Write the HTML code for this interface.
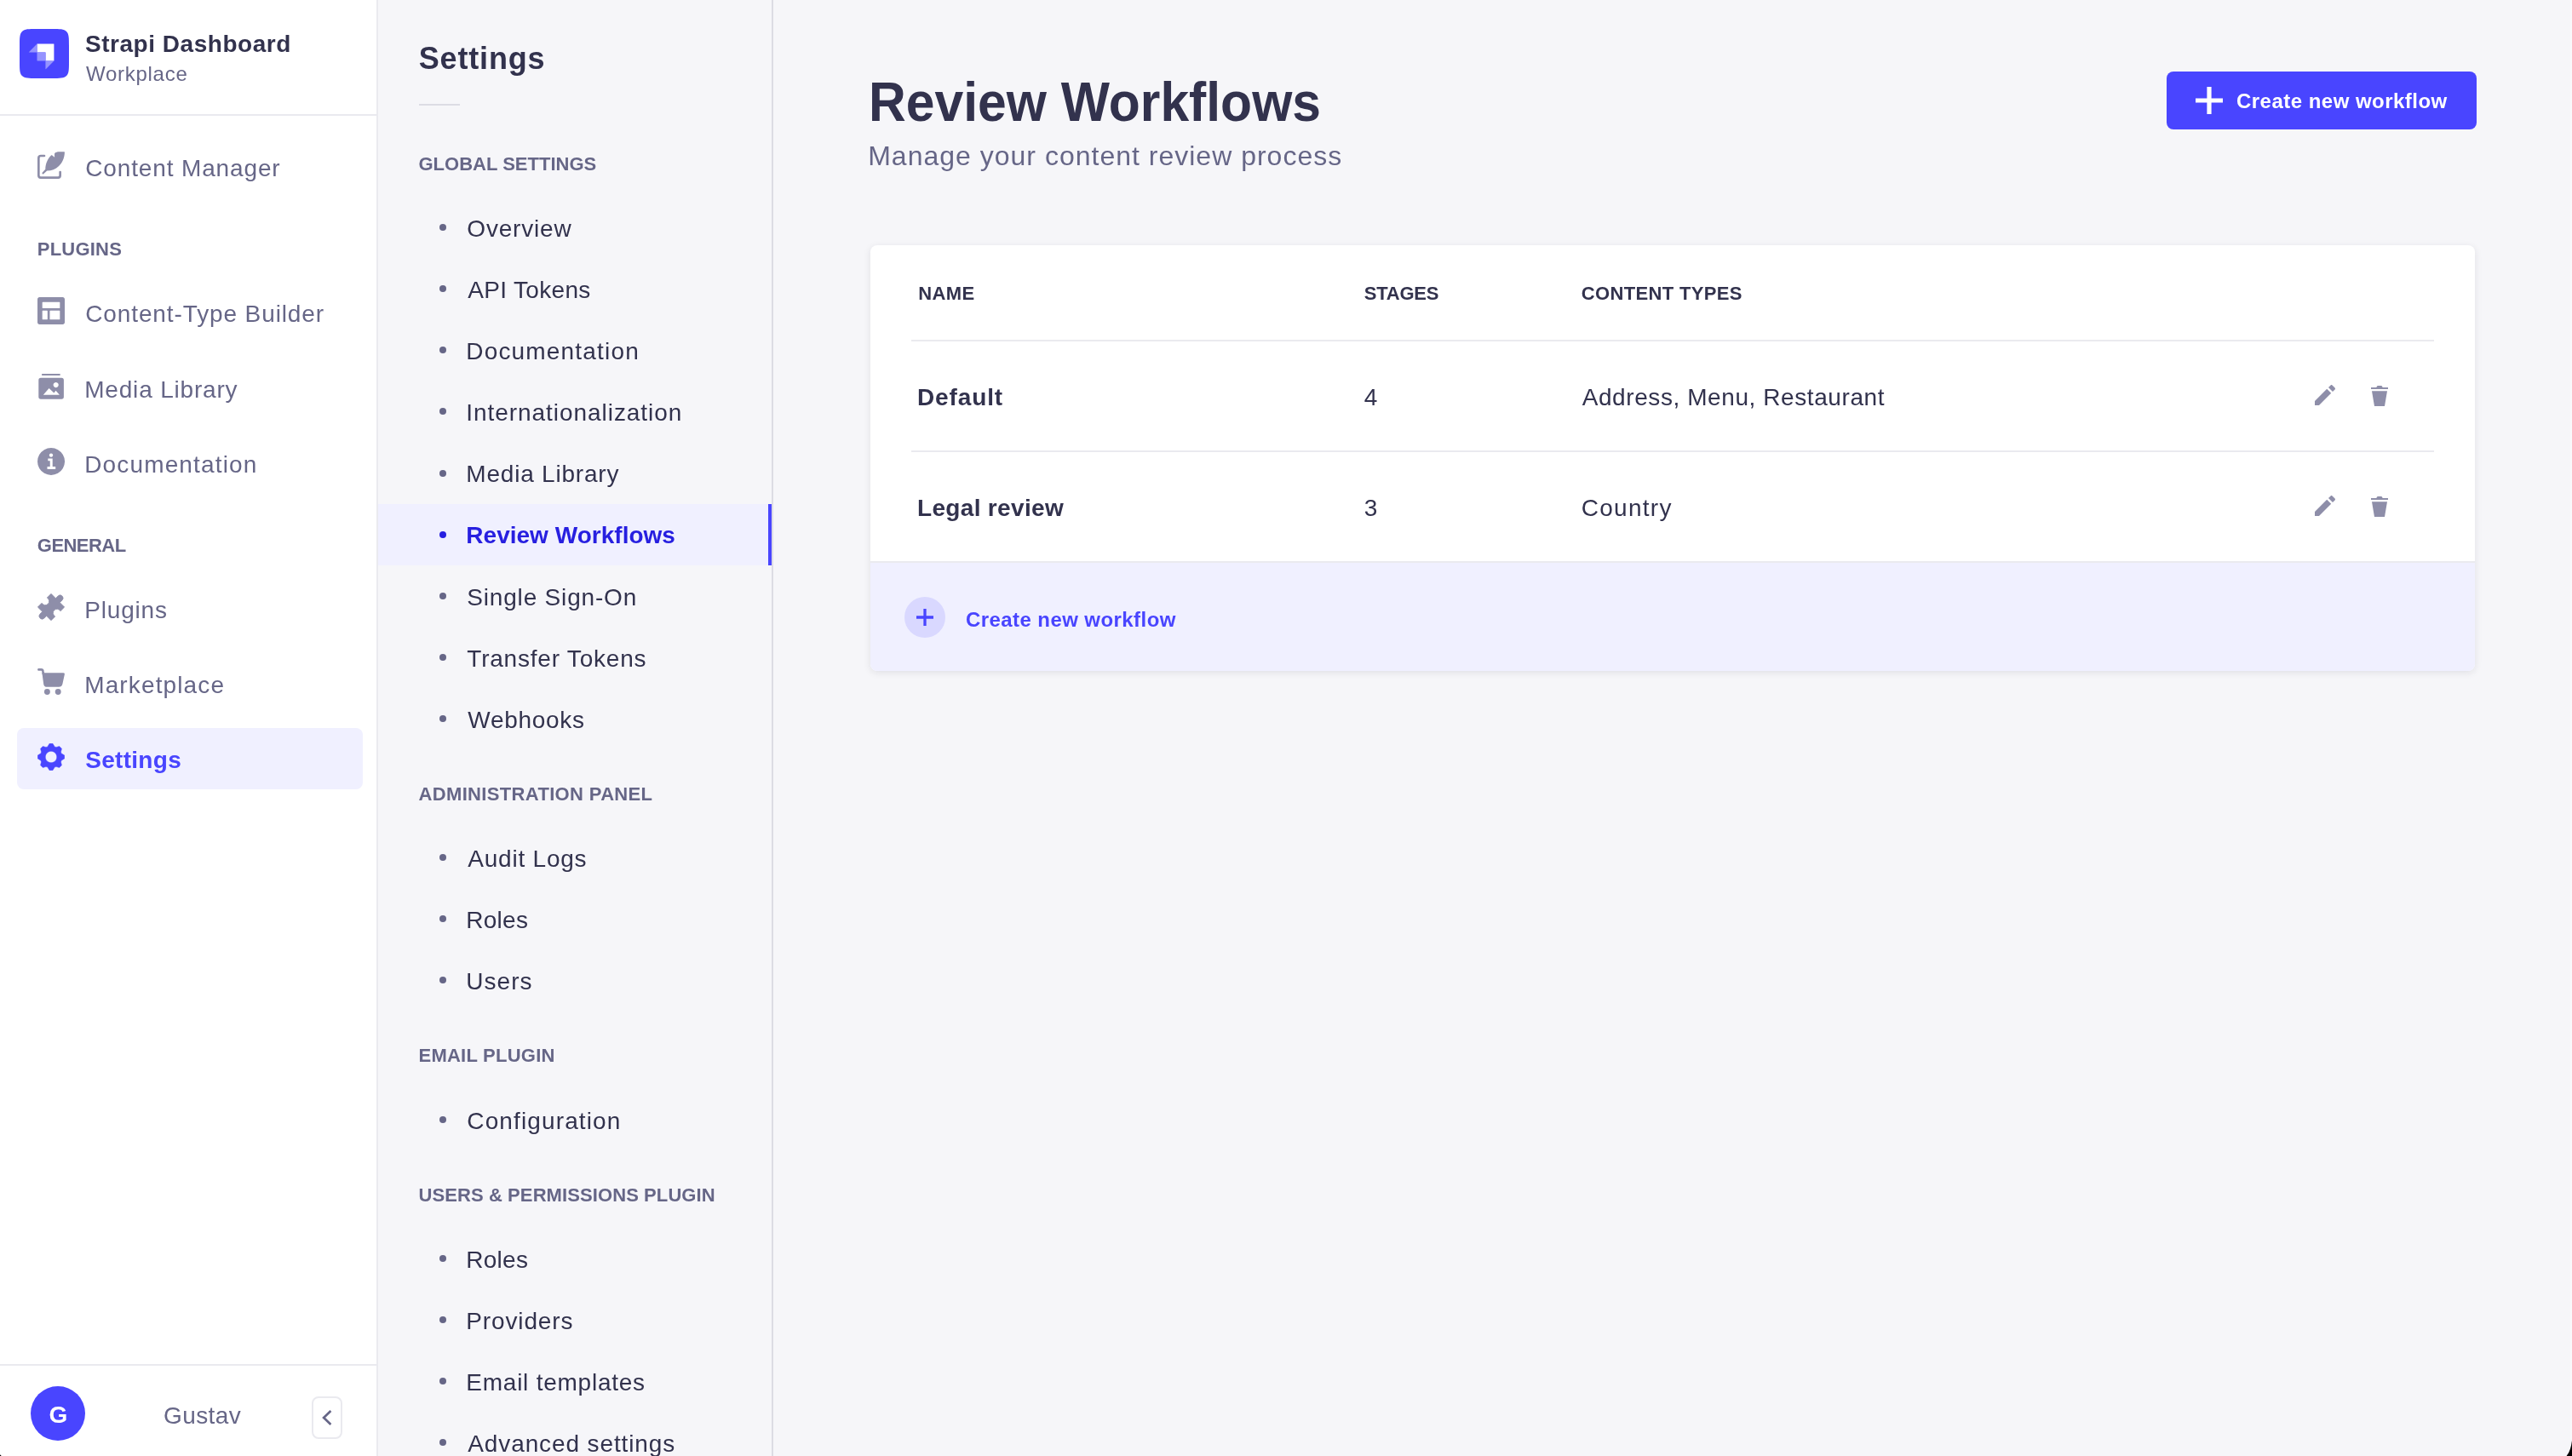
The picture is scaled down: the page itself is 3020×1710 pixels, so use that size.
<!DOCTYPE html>
<html lang="en">
<head>
<meta charset="utf-8">
<title>Review Workflows - Strapi Dashboard</title>
<style>
html,body{margin:0;padding:0}
html{width:3020px;height:1710px;overflow:hidden;background:#f6f6f9}
body{width:3020px;height:1710px;position:relative;overflow:hidden;background:#f6f6f9;font-family:"Liberation Sans",sans-serif}
.t{position:absolute;white-space:nowrap;line-height:1;font-weight:400}
.hl{position:absolute;height:2px;background:#eaeaef}
#nav{position:absolute;left:0;top:0;width:442px;height:1710px;background:#fff;border-right:2px solid #eaeaef}
#subnav{position:absolute;left:444px;top:0;width:462px;height:1710px;background:#f6f6f9;border-right:2px solid #dcdce4}
#txt{position:absolute;left:0;top:0;width:3020px;height:1710px;overflow:hidden;will-change:transform}
#card{position:absolute;left:1022px;top:288px;width:1884px;height:500px;border-radius:8px;background:#fff;box-shadow:0 2px 8px rgba(33,33,52,0.1)}
</style>
</head>
<body>
<div id="nav"></div>
<div class="hl" style="left:0;top:134px;width:442px"></div>
<div class="hl" style="left:0;top:1602px;width:442px"></div>
<svg style="position:absolute;left:23px;top:34px" width="58" height="58" viewBox="0 0 800 800"><path d="M0 277.333C0 146.596 0 81.2266 40.6133 40.6133C81.2266 0 146.596 0 277.333 0H522.667C653.404 0 718.773 0 759.387 40.6133C800 81.2266 800 146.596 800 277.333V522.667C800 653.404 800 718.773 759.387 759.387C718.773 800 653.404 800 522.667 800H277.333C146.596 800 81.2266 800 40.6133 759.387C0 718.773 0 653.404 0 522.667V277.333Z" fill="#4945ff"/><path d="M552 242.667H282.667V380H420V517.333H557.333V248C557.333 245.054 554.946 242.667 552 242.667Z" fill="#fff"/><path d="M282.667 380H414.667C417.612 380 420 382.388 420 385.333V517.333H288C285.054 517.333 282.667 514.946 282.667 512V380Z" fill="#9593ff"/><path d="M420 517.333H557.333L424.552 650.115C422.872 651.795 420 650.605 420 648.229V517.333Z" fill="#9593ff"/><path d="M282.667 380H151.771C149.395 380 148.205 377.128 149.885 375.448L282.667 242.667V380Z" fill="#9593ff"/></svg>
<div style="position:absolute;left:20px;top:855px;width:406px;height:72px;border-radius:8px;background:#f0f0ff"></div>
<svg style="position:absolute;left:44px;top:178px" width="32" height="32" viewBox="0 0 32 32"><path d="M8 5H4Q1.33 5 1.33 7.67V28Q1.33 30.67 4 30.67H24Q26.67 30.67 26.67 28V24" fill="none" stroke="#8e8ea9" stroke-width="2.67" stroke-linecap="round"/><path d="M31 0.2H25.2C23.3 0.2 21.6 0.8 20.7 1.6C20.1 2.1 20 2.6 20 3.3L20.1 6.7L17.3 4.6C16.8 4.2 16.3 4.2 15.8 4.7C11.8 8.6 9.3 14.5 9.3 20.7L5.2 25.2L6.6 26.7L11.2 22.6C16.2 22.7 21.2 21 25.1 17.1C29 13.2 31.6 8 31.9 1.2C31.95 0.5 31.7 0.2 31 0.2Z" fill="#8e8ea9"/></svg>
<svg style="position:absolute;left:44px;top:349px" width="32" height="32" viewBox="0 0 24 24"><path fill="#8e8ea9" fill-rule="evenodd" d="M1.8 0h20.4C23.2 0 24 .8 24 1.8v20.4c0 1-.8 1.8-1.8 1.8H1.8C.8 24 0 23.2 0 22.2V1.8C0 .8.8 0 1.8 0Zm2.9 4.222a.45.45 0 0 0-.45.45v4.7c0 .25.2.45.45.45h14.6c.25 0 .45-.2.45-.45v-4.7a.45.45 0 0 0-.45-.45H4.7Zm0 7.6a.45.45 0 0 0-.45.45v7.05c0 .25.2.45.45.45h3.7c.25 0 .45-.2.45-.45v-7.05a.45.45 0 0 0-.45-.45H4.7Zm6.6 0a.45.45 0 0 0-.45.45v7.05c0 .25.2.45.45.45h8c.25 0 .45-.2.45-.45v-7.05a.45.45 0 0 0-.45-.45h-8Z"/></svg>
<svg style="position:absolute;left:44px;top:437px" width="32" height="32" viewBox="0 0 32 32"><rect x="4.9" y="1.9" width="22" height="2.1" rx="1" fill="#8e8ea9"/><path fill="#8e8ea9" fill-rule="evenodd" d="M4 6.7H28.2Q30.9 6.7 30.9 9.4V29Q30.9 31.7 28.2 31.7H4Q1.3 31.7 1.3 29V9.4Q1.3 6.7 4 6.7ZM21.66 11.95a3.1 3.1 0 1 0 .01 0ZM13.6 19 6.8 26.8H25.9L21.5 21.8 19.4 24.4Z"/></svg>
<svg style="position:absolute;left:44px;top:526px" width="32" height="32" viewBox="0 0 32 32"><path fill="#8e8ea9" fill-rule="evenodd" d="M16 0a16 16 0 1 0 .01 0ZM16 6.45a2.15 2.15 0 1 0 .01 0ZM12.3 12.4H17.7V22H21.2V25H11.5V22H14.75V15.2H12.3Z"/></svg>
<svg style="position:absolute;left:44px;top:697px" width="32" height="32" viewBox="0 0 32 32"><path transform="translate(16 16) rotate(45)" fill="#8e8ea9" stroke="#8e8ea9" stroke-width="0.8" stroke-linejoin="round" d="M-11.05 -11.05H-3.45V-14.9A3.45 3.45 0 0 1 3.45 -14.9V-11.05H11.05V-4.41A4.6 4.6 0 1 0 11.05 4.41V11.05H3.45V14.9A3.45 3.45 0 0 1 -3.45 14.9V11.05H-11.05V4.41A4.6 4.6 0 1 0 -11.05 -4.41Z"/></svg>
<svg style="position:absolute;left:44px;top:785px" width="32" height="32" viewBox="0 0 32 32"><path d="M1.4 1.4H4.4Q6.2 1.4 6.4 3.2L6.8 6" fill="none" stroke="#8e8ea9" stroke-width="2.7" stroke-linecap="round"/><path fill="#8e8ea9" d="M5.4 5.2H30.2Q32.3 5.2 31.8 7.2L29.4 18.2Q28.6 21.8 25 21.8H11.2Q7.7 21.8 7.2 18.4Z"/><circle cx="11.4" cy="27.5" r="3.45" fill="#8e8ea9"/><circle cx="24.2" cy="27.5" r="3.45" fill="#8e8ea9"/></svg>
<svg style="position:absolute;left:44px;top:873px" width="32" height="32" viewBox="0 0 32 32"><path fill="#4945ff" stroke="#4945ff" stroke-width="0.5" stroke-linejoin="round" fill-rule="evenodd" d="M14.07 0.32L17.93 0.32L19.70 3.33Q20.63 4.82 22.34 4.42L25.73 3.55L28.45 6.27L27.58 9.66Q27.18 11.37 28.67 12.30L31.68 14.07L31.68 17.93L28.67 19.70Q27.18 20.63 27.58 22.34L28.45 25.73L25.73 28.45L22.34 27.58Q20.63 27.18 19.70 28.67L17.93 31.68L14.07 31.68L12.30 28.67Q11.37 27.18 9.66 27.58L6.27 28.45L3.55 25.73L4.42 22.34Q4.82 20.63 3.33 19.70L0.32 17.93L0.32 14.07L3.33 12.30Q4.82 11.37 4.42 9.66L3.55 6.27L6.27 3.55L9.66 4.42Q11.37 4.82 12.30 3.33ZM16 9.25a6.75 6.75 0 1 0 .01 0Z"/></svg>
<div style="position:absolute;left:36px;top:1628px;width:64px;height:64px;border-radius:50%;background:#4945ff"></div>
<div style="position:absolute;left:366px;top:1640px;width:36px;height:50px;border-radius:8px;border:2px solid #eaeaef;box-sizing:border-box;background:#fff"></div>
<svg style="position:absolute;left:376px;top:1655px" width="16" height="20" viewBox="0 0 16 20"><path d="M12.4 2 L4.1 10 L12.4 18" fill="none" stroke="#666687" stroke-width="2.7"/></svg>
<div id="subnav"></div>
<div style="position:absolute;left:492px;top:122px;width:48px;height:2px;background:#dcdce4"></div>
<div style="position:absolute;left:516px;top:263px;width:8px;height:8px;border-radius:50%;background:#666687"></div>
<div style="position:absolute;left:516px;top:335px;width:8px;height:8px;border-radius:50%;background:#666687"></div>
<div style="position:absolute;left:516px;top:407px;width:8px;height:8px;border-radius:50%;background:#666687"></div>
<div style="position:absolute;left:516px;top:479px;width:8px;height:8px;border-radius:50%;background:#666687"></div>
<div style="position:absolute;left:516px;top:552px;width:8px;height:8px;border-radius:50%;background:#666687"></div>
<div style="position:absolute;left:444px;top:592px;width:462px;height:72px;background:#f0f0ff"></div>
<div style="position:absolute;left:902px;top:592px;width:4px;height:72px;background:#4945ff"></div>
<div style="position:absolute;left:516px;top:624px;width:8px;height:8px;border-radius:50%;background:#271fe0"></div>
<div style="position:absolute;left:516px;top:696px;width:8px;height:8px;border-radius:50%;background:#666687"></div>
<div style="position:absolute;left:516px;top:768px;width:8px;height:8px;border-radius:50%;background:#666687"></div>
<div style="position:absolute;left:516px;top:840px;width:8px;height:8px;border-radius:50%;background:#666687"></div>
<div style="position:absolute;left:516px;top:1003px;width:8px;height:8px;border-radius:50%;background:#666687"></div>
<div style="position:absolute;left:516px;top:1075px;width:8px;height:8px;border-radius:50%;background:#666687"></div>
<div style="position:absolute;left:516px;top:1147px;width:8px;height:8px;border-radius:50%;background:#666687"></div>
<div style="position:absolute;left:516px;top:1311px;width:8px;height:8px;border-radius:50%;background:#666687"></div>
<div style="position:absolute;left:516px;top:1474px;width:8px;height:8px;border-radius:50%;background:#666687"></div>
<div style="position:absolute;left:516px;top:1546px;width:8px;height:8px;border-radius:50%;background:#666687"></div>
<div style="position:absolute;left:516px;top:1618px;width:8px;height:8px;border-radius:50%;background:#666687"></div>
<div style="position:absolute;left:516px;top:1690px;width:8px;height:8px;border-radius:50%;background:#666687"></div>
<div style="position:absolute;left:2544px;top:84px;width:364px;height:68px;border-radius:8px;background:#4945ff"></div>
<svg style="position:absolute;left:2578px;top:102px" width="32" height="32" viewBox="0 0 32 32"><path d="M13.4 0h5.2v13.4H32v5.2H18.6V32h-5.2V18.6H0v-5.2h13.4z" fill="#fff"/></svg>
<div id="card"></div>
<div style="position:absolute;left:1022px;top:659px;width:1884px;height:129px;background:#f0f0ff;border-top:2px solid #eaeaef;box-sizing:border-box;border-radius:0 0 8px 8px"></div>
<div class="hl" style="left:1070px;top:399px;width:1788px"></div>
<div class="hl" style="left:1070px;top:529px;width:1788px"></div>
<svg style="position:absolute;left:2718px;top:452px" width="24" height="24" viewBox="0 0 24 24"><path fill="#8e8ea9" d="M23.604 3.514c.528.528.528 1.36 0 1.887l-2.622 2.607-4.99-4.99L18.6.396a1.322 1.322 0 0 1 1.887 0l3.118 3.118ZM0 24v-4.99l14.2-14.2 4.99 4.99L4.99 24H0Z"/></svg>
<svg style="position:absolute;left:2782px;top:453px" width="24" height="24" viewBox="0 0 24 24"><path fill="#8e8ea9" d="M3.236 6.149a.2.2 0 0 0-.197.233L6 24h12l2.96-17.618a.2.2 0 0 0-.196-.233H3.236ZM21.8 1.983c.11 0 .2.09.2.2v1.584a.2.2 0 0 1-.2.2H2.2a.2.2 0 0 1-.2-.2V2.183c0-.11.09-.2.2-.2h5.511c.9 0 1.631-1.09 1.631-1.983h5.316c0 .894.73 1.983 1.631 1.983H21.8Z"/></svg>
<svg style="position:absolute;left:2718px;top:582px" width="24" height="24" viewBox="0 0 24 24"><path fill="#8e8ea9" d="M23.604 3.514c.528.528.528 1.36 0 1.887l-2.622 2.607-4.99-4.99L18.6.396a1.322 1.322 0 0 1 1.887 0l3.118 3.118ZM0 24v-4.99l14.2-14.2 4.99 4.99L4.99 24H0Z"/></svg>
<svg style="position:absolute;left:2782px;top:583px" width="24" height="24" viewBox="0 0 24 24"><path fill="#8e8ea9" d="M3.236 6.149a.2.2 0 0 0-.197.233L6 24h12l2.96-17.618a.2.2 0 0 0-.196-.233H3.236ZM21.8 1.983c.11 0 .2.09.2.2v1.584a.2.2 0 0 1-.2.2H2.2a.2.2 0 0 1-.2-.2V2.183c0-.11.09-.2.2-.2h5.511c.9 0 1.631-1.09 1.631-1.983h5.316c0 .894.73 1.983 1.631 1.983H21.8Z"/></svg>
<div style="position:absolute;left:1062px;top:701px;width:48px;height:48px;border-radius:50%;background:#d9d8ff"></div>
<svg style="position:absolute;left:1076px;top:715px" width="20" height="20" viewBox="0 0 20 20"><path d="M8.35 0h3.3v8.35H20v3.3h-8.35V20h-3.3v-8.35H0v-3.3h8.35z" fill="#4945ff"/></svg>
<svg style="position:absolute;left:3012px;top:1690px" width="8" height="20" viewBox="0 0 8 20"><path d="M1.6 20L4.3 15.7L6 11.6L7.07 7.5L8 2V20Z" fill="#000"/></svg>
<svg style="position:absolute;left:0;top:1708px" width="2" height="2" viewBox="0 0 2 2"><path d="M0 0.2L1.7 2H0Z" fill="#000"/></svg>
<div style="position:absolute;left:3018px;top:0;width:2px;height:1690px;background:#f9f9fb"></div>
<div id="txt">
<span class="t" style="left:100.00px;top:38.00px;font-size:28px;font-weight:700;color:#32324d;letter-spacing:0.533px;">Strapi Dashboard</span>
<span class="t" style="left:101.00px;top:75.00px;font-size:24px;color:#666687;letter-spacing:0.725px;">Workplace</span>
<span class="t" style="left:100.20px;top:184.00px;font-size:28px;color:#666687;letter-spacing:0.864px;">Content Manager</span>
<span class="t" style="left:43.80px;top:282.00px;font-size:22px;font-weight:700;color:#666687;letter-spacing:0.217px;">PLUGINS</span>
<span class="t" style="left:100.20px;top:355.00px;font-size:28px;color:#666687;letter-spacing:0.889px;">Content-Type Builder</span>
<span class="t" style="left:99.20px;top:444.00px;font-size:28px;color:#666687;letter-spacing:0.817px;">Media Library</span>
<span class="t" style="left:99.20px;top:532.00px;font-size:28px;color:#666687;letter-spacing:1.150px;">Documentation</span>
<span class="t" style="left:43.80px;top:630.00px;font-size:22px;font-weight:700;color:#666687;letter-spacing:-0.533px;">GENERAL</span>
<span class="t" style="left:99.20px;top:703.00px;font-size:28px;color:#666687;letter-spacing:0.833px;">Plugins</span>
<span class="t" style="left:99.20px;top:791.00px;font-size:28px;color:#666687;letter-spacing:1.130px;">Marketplace</span>
<span class="t" style="left:100.20px;top:879.00px;font-size:28px;font-weight:700;color:#4945ff;letter-spacing:0.300px;">Settings</span>
<span class="t" style="left:57.50px;top:1648.00px;font-size:28px;font-weight:700;color:#fff;letter-spacing:0.000px;">G</span>
<span class="t" style="left:192.00px;top:1649.00px;font-size:28px;color:#666687;letter-spacing:0.400px;">Gustav</span>
<span class="t" style="left:491.70px;top:51.00px;font-size:36px;font-weight:700;color:#32324d;letter-spacing:0.843px;">Settings</span>
<span class="t" style="left:491.50px;top:182.00px;font-size:22px;font-weight:700;color:#666687;letter-spacing:0.007px;">GLOBAL SETTINGS</span>
<span class="t" style="left:548.30px;top:255.00px;font-size:28px;color:#32324d;letter-spacing:0.814px;">Overview</span>
<span class="t" style="left:549.30px;top:327.00px;font-size:28px;color:#32324d;letter-spacing:0.322px;">API Tokens</span>
<span class="t" style="left:547.30px;top:399.00px;font-size:28px;color:#32324d;letter-spacing:1.175px;">Documentation</span>
<span class="t" style="left:547.30px;top:471.00px;font-size:28px;color:#32324d;letter-spacing:0.947px;">Internationalization</span>
<span class="t" style="left:547.30px;top:543.00px;font-size:28px;color:#32324d;letter-spacing:0.792px;">Media Library</span>
<span class="t" style="left:547.30px;top:615.00px;font-size:28px;font-weight:700;color:#271fe0;letter-spacing:0.020px;">Review Workflows</span>
<span class="t" style="left:548.30px;top:688.00px;font-size:28px;color:#32324d;letter-spacing:0.815px;">Single Sign-On</span>
<span class="t" style="left:548.30px;top:760.00px;font-size:28px;color:#32324d;letter-spacing:0.786px;">Transfer Tokens</span>
<span class="t" style="left:549.30px;top:832.00px;font-size:28px;color:#32324d;letter-spacing:0.714px;">Webhooks</span>
<span class="t" style="left:491.50px;top:922.00px;font-size:22px;font-weight:700;color:#666687;letter-spacing:0.342px;">ADMINISTRATION PANEL</span>
<span class="t" style="left:549.30px;top:995.00px;font-size:28px;color:#32324d;letter-spacing:0.778px;">Audit Logs</span>
<span class="t" style="left:547.30px;top:1067.00px;font-size:28px;color:#32324d;letter-spacing:0.250px;">Roles</span>
<span class="t" style="left:547.30px;top:1139.00px;font-size:28px;color:#32324d;letter-spacing:1.050px;">Users</span>
<span class="t" style="left:491.50px;top:1229.00px;font-size:22px;font-weight:700;color:#666687;letter-spacing:0.245px;">EMAIL PLUGIN</span>
<span class="t" style="left:548.30px;top:1303.00px;font-size:28px;color:#32324d;letter-spacing:1.125px;">Configuration</span>
<span class="t" style="left:491.50px;top:1393.00px;font-size:22px;font-weight:700;color:#666687;letter-spacing:0.088px;">USERS &amp; PERMISSIONS PLUGIN</span>
<span class="t" style="left:547.30px;top:1466.00px;font-size:28px;color:#32324d;letter-spacing:0.250px;">Roles</span>
<span class="t" style="left:547.30px;top:1538.00px;font-size:28px;color:#32324d;letter-spacing:0.863px;">Providers</span>
<span class="t" style="left:547.30px;top:1610.00px;font-size:28px;color:#32324d;letter-spacing:0.757px;">Email templates</span>
<span class="t" style="left:549.30px;top:1682.00px;font-size:28px;color:#32324d;letter-spacing:0.881px;">Advanced settings</span>
<span class="t" style="left:1019.81px;top:88.00px;font-size:64px;font-weight:700;color:#32324d;letter-spacing:0.000px;transform:scaleX(0.9469);transform-origin:0 0;">Review Workflows</span>
<span class="t" style="left:1019.20px;top:167.00px;font-size:32px;color:#666687;letter-spacing:1.003px;">Manage your content review process</span>
<span class="t" style="left:2626.00px;top:107.00px;font-size:24px;font-weight:700;color:#fff;letter-spacing:0.472px;">Create new workflow</span>
<span class="t" style="left:1078.20px;top:334.00px;font-size:22px;font-weight:700;color:#32324d;letter-spacing:0.367px;">NAME</span>
<span class="t" style="left:1601.70px;top:334.00px;font-size:22px;font-weight:700;color:#32324d;letter-spacing:-0.200px;">STAGES</span>
<span class="t" style="left:1856.70px;top:334.00px;font-size:22px;font-weight:700;color:#32324d;letter-spacing:0.350px;">CONTENT TYPES</span>
<span class="t" style="left:1077.00px;top:453.00px;font-size:28px;font-weight:700;color:#32324d;letter-spacing:0.867px;">Default</span>
<span class="t" style="left:1601.70px;top:453.00px;font-size:28px;color:#32324d;letter-spacing:0.000px;">4</span>
<span class="t" style="left:1857.70px;top:453.00px;font-size:28px;color:#32324d;letter-spacing:0.583px;">Address, Menu, Restaurant</span>
<span class="t" style="left:1077.00px;top:583.00px;font-size:28px;font-weight:700;color:#32324d;letter-spacing:0.327px;">Legal review</span>
<span class="t" style="left:1601.70px;top:583.00px;font-size:28px;color:#32324d;letter-spacing:0.000px;">3</span>
<span class="t" style="left:1856.70px;top:583.00px;font-size:28px;color:#32324d;letter-spacing:1.283px;">Country</span>
<span class="t" style="left:1133.90px;top:716.00px;font-size:24px;font-weight:700;color:#4945ff;letter-spacing:0.433px;">Create new workflow</span>
</div>
</body>
</html>
